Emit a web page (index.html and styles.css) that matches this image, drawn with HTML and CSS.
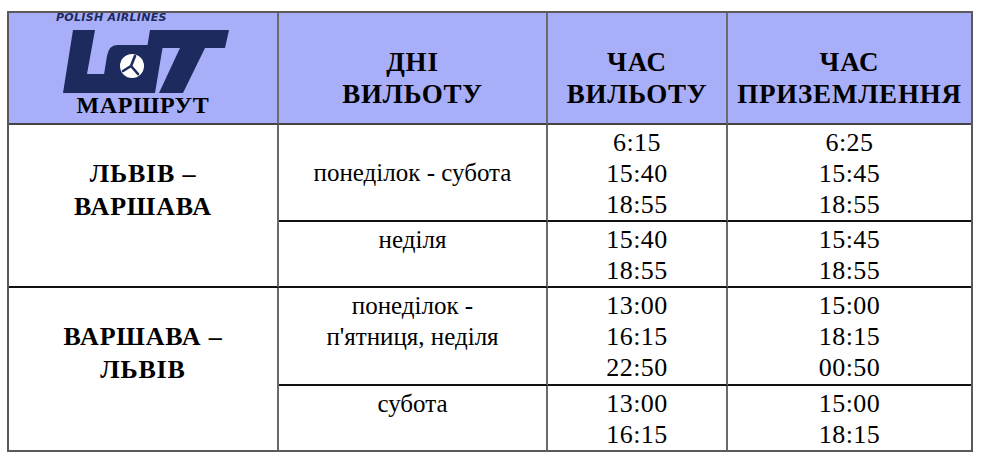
FILE: index.html
```html
<!DOCTYPE html>
<html>
<head>
<meta charset="utf-8">
<link rel="stylesheet" href="styles.css">
</head>
<body>
<div class="schedule">
  <div class="cell head route-head">
    <span class="brand">POLISH AIRLINES</span>
    <svg class="lot" viewBox="55 28 175 67" width="175" height="67">
      <path fill="#1d2a5e" d="M73 30 L95 30 L87 74 L113 74 L109 93 L63 93 Z"/>
      <path fill="#1d2a5e" d="M117 45 L163 45 L155 93 L101 93 L107 56 Q109 45 117 45 Z"/>
      <path fill="#1d2a5e" d="M150 30 L229 30 L225 48 L205 48 L183 93 L159 93 L180 48 L147 48 Z"/>
      <circle cx="132" cy="66" r="12" fill="#ffffff"/>
      <path fill="none" stroke="#1d2a5e" stroke-width="2.6" stroke-linecap="round" d="M131 66 L135 56 M131 66 L123 71 M131 66 L138 74"/>
    </svg>
    <span class="route-title">МАРШРУТ</span>
  </div>
  <div class="cell head hcol"><span class="htext">ДНІ<br>ВИЛЬОТУ</span></div>
  <div class="cell head hcol"><span class="htext">ЧАС<br>ВИЛЬОТУ</span></div>
  <div class="cell head hcol last"><span class="htext">ЧАС<br>ПРИЗЕМЛЕННЯ</span></div>

  <div class="cell route span2"><span class="rtext">ЛЬВІВ –<br>ВАРШАВА</span></div>
  <div class="cell days mid"><span class="dtext">понеділок - субота</span></div>
  <div class="cell time"><span class="ttext">6:15<br>15:40<br>18:55</span></div>
  <div class="cell time last"><span class="ttext">6:25<br>15:45<br>18:55</span></div>

  <div class="cell days"><span class="dtext">неділя</span></div>
  <div class="cell time"><span class="ttext">15:40<br>18:55</span></div>
  <div class="cell time last"><span class="ttext">15:45<br>18:55</span></div>

  <div class="cell route span2 bottom"><span class="rtext">ВАРШАВА –<br>ЛЬВІВ</span></div>
  <div class="cell days"><span class="dtext">понеділок -<br>п'ятниця, неділя</span></div>
  <div class="cell time"><span class="ttext">13:00<br>16:15<br>22:50</span></div>
  <div class="cell time last"><span class="ttext">15:00<br>18:15<br>00:50</span></div>

  <div class="cell days bottom"><span class="dtext">субота</span></div>
  <div class="cell time bottom"><span class="ttext">13:00<br>16:15</span></div>
  <div class="cell time last bottom"><span class="ttext">15:00<br>18:15</span></div>
</div>
</body>
</html>
```

FILE: styles.css
```css
html, body {
  margin: 0;
  padding: 0;
  background: #ffffff;
}

body {
  padding: 11px 0 0 7px;
  font-family: "Times New Roman", Tinos, "Liberation Serif", serif;
}

.schedule {
  display: grid;
  grid-template-columns: 270px 269px 180px 243px;
  grid-template-rows: 112px 97px 66px 98px 64px;
  width: 966px;
  box-sizing: border-box;
  border: 2px solid #5a5a5a;
  color: #000000;
  font-family: "Times New Roman", Tinos, "Liberation Serif", serif;
}

.cell {
  box-sizing: border-box;
  display: flex;
  flex-direction: column;
  align-items: center;
  justify-content: flex-start;
  text-align: center;
  border-right: 2px solid #6a6a6a;
  border-bottom: 2px solid #111111;
  min-width: 0;
}

.cell.last { border-right: none; }
.cell.bottom { border-bottom: none; }

.span2 { grid-row: span 2; }

.head {
  background: #a8aef8;
  border-bottom-color: #444444;
}

.hcol {
  justify-content: flex-end;
  padding-bottom: 13px;
}

.htext {
  font-family: "Times New Roman", Tinos, "Liberation Serif", serif;
  font-weight: bold;
  font-size: 27px;
  line-height: 32px;
  letter-spacing: 0.8px;
}

.route-head {
  align-items: stretch;
}

.brand {
  font-family: "DejaVu Sans", sans-serif;
  font-style: italic;
  font-weight: bold;
  font-size: 11px;
  line-height: 11px;
  letter-spacing: 0.3px;
  color: #1d2a5e;
  margin: -1px 0 0 47px;
  text-align: left;
}

.lot {
  display: block;
  margin: 5px 0 0 46px;
}

.route-title {
  font-family: "Times New Roman", Tinos, "Liberation Serif", serif;
  font-weight: bold;
  font-size: 24px;
  line-height: 26px;
  letter-spacing: 0.6px;
  margin-top: -3px;
}

.route {
  padding-top: 32px;
}

.rtext {
  font-family: "Times New Roman", Tinos, "Liberation Serif", serif;
  font-weight: bold;
  font-size: 26px;
  line-height: 33px;
  letter-spacing: 0.8px;
}

.days {
  padding-top: 2px;
}

.days.mid {
  justify-content: center;
  padding-top: 0;
}

.dtext {
  font-family: "Times New Roman", Tinos, "Liberation Serif", serif;
  font-size: 25px;
  line-height: 31px;
}

.time {
  padding-top: 2px;
}

.ttext {
  font-family: "Times New Roman", Tinos, "Liberation Serif", serif;
  font-size: 26px;
  line-height: 31px;
  letter-spacing: 0.5px;
}
```
